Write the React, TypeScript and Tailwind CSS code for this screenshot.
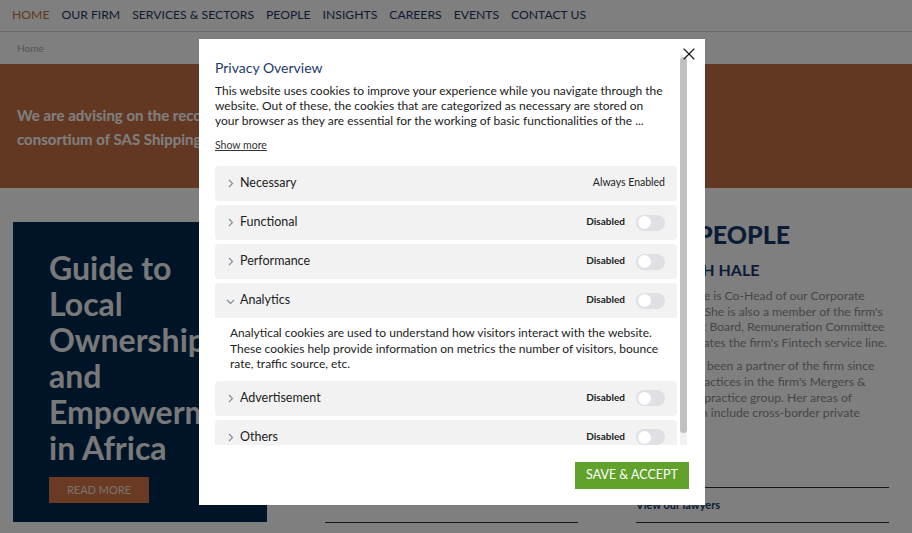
import React from "react";
import { X } from "lucide-react";

const navItems = ["HOME", "OUR FIRM", "SERVICES & SECTORS", "PEOPLE", "INSIGHTS", "CAREERS", "EVENTS", "CONTACT US"];

type Category = { name: string; always?: boolean; open?: boolean; text?: string[] };

const categories: Category[] = [
  { name: "Necessary", always: true },
  { name: "Functional" },
  { name: "Performance" },
  {
    name: "Analytics",
    open: true,
    text: [
      "Analytical cookies are used to understand how visitors interact with the website.",
      "These cookies help provide information on metrics the number of visitors, bounce",
      "rate, traffic source, etc.",
    ],
  },
  { name: "Advertisement" },
  { name: "Others" },
];

const Toggle: React.FC = () => (
  <span className="flex h-[16px] w-[29px] items-center rounded-full bg-[#dfdfe4] px-[2px]">
    <span className="h-[13px] w-[13px] rounded-full bg-white" />
  </span>
);

const CategoryRow: React.FC<{ cat: Category }> = ({ cat }) => (
  <div className="rounded-[4px] bg-[#f2f2f2]">
    <div className="flex h-[35px] items-center pl-[12px] pr-[12px]">
      <span className="flex w-[13px] items-center">
        {cat.open ? (
          <svg width="9" height="6" viewBox="0 0 9 6" className="-ml-[1px] mt-[3px]" fill="none">
            <path d="M1 1l3.5 3.5L8 1" stroke="#7c8a99" strokeWidth="1.1" />
          </svg>
        ) : (
          <svg width="6" height="9" viewBox="0 0 6 9" className="ml-[1px]" fill="none">
            <path d="M1 1l3.5 3.5L1 8" stroke="#7c8a99" strokeWidth="1.1" />
          </svg>
        )}
      </span>
      <span className="text-[12.5px] text-[#222]">{cat.name}</span>
      <span className="ml-auto flex items-center">
        {cat.always ? (
          <span className="-mt-[2px] text-[10.5px] text-[#222]">Always Enabled</span>
        ) : (
          <>
            <span className="mr-[11px] -mt-[2px] text-[10px] font-bold text-[#222]">Disabled</span>
            <Toggle />
          </>
        )}
      </span>
    </div>
    {cat.text && (
      <div className="whitespace-nowrap bg-white px-[15px] pb-[5px] pt-[7px] text-[12px] leading-[15.5px] text-[#222]">
        {cat.text.map((line) => (
          <p key={line}>{line}</p>
        ))}
      </div>
    )}
  </div>
);

const LinkBlock: React.FC<{ label?: string }> = ({ label }) => (
  <div className="mt-auto flex h-[36px] items-center border-y border-[#2a2a2a] text-[11px] font-bold text-[#17386e]">
    {label}
  </div>
);

export default function App() {
  return (
    <div className="relative h-[533px] w-[912px] overflow-hidden bg-white font-['Lato',sans-serif]">
      <nav className="flex h-[32px] items-center gap-[12px] border-b border-[#d6d6d6] pl-[12px] text-[12.2px] text-[#1b3766]">
        {navItems.map((item, i) => (
          <span key={item} className={i === 0 ? "text-[#c67044]" : ""}>
            {item}
          </span>
        ))}
      </nav>
      <div className="flex h-[32px] items-center pl-[17px] text-[10px] text-[#aaaaaa]">Home</div>

      <section className="h-[124px] whitespace-nowrap bg-[#c67044] pl-[17px] pt-[39px] text-[15px] font-bold leading-[24px] text-white">
        <p>We are advising on the recommended cash offer made by a</p>
        <p>consortium of SAS Shipping Agencies Services for the shares</p>
      </section>

      <main className="flex gap-[58px] pl-[13px] pt-[34px]">
        {/* feature card */}
        <div className="h-[300px] w-[254px] shrink-0 overflow-hidden bg-[#002850] pl-[36px] pt-[28px]">
          <h2 className="whitespace-nowrap text-[32px] font-bold leading-[36px] text-[#f2f2f2]">
            <span className="block">Guide to</span>
            <span className="block">Local</span>
            <span className="block">Ownership</span>
            <span className="block">and</span>
            <span className="block">Empowerment</span>
            <span className="block">in Africa</span>
          </h2>
          <button className="mt-[11px] h-[26px] w-[100px] bg-[#d47444] text-[11px] text-[#f3e3da]">READ MORE</button>
        </div>

        {/* middle column */}
        <div className="flex h-[301px] w-[253px] shrink-0 flex-col">
          <h3 className="text-[25px] font-black leading-[24px] text-[#17386e]">INSIGHTS</h3>
          <LinkBlock />
        </div>

        {/* people column */}
        <div className="flex h-[301px] w-[253px] shrink-0 flex-col">
          <h3 className="whitespace-nowrap text-[25px] font-black leading-[24px] text-[#17386e]">OUR PEOPLE</h3>
          <h4 className="mt-[14px] whitespace-nowrap text-[16px] font-bold leading-[20px] text-[#17386e]">DEBORAH HALE</h4>
          <div className="mt-[8px] whitespace-nowrap text-[12.2px] leading-[15.6px] text-[#8e8e8e]">
            <p>Deborah Hale is Co-Head of our Corporate</p>
            <p>department. She is also a member of the firm's</p>
            <p>Management Board, Remuneration Committee</p>
            <p>and co-ordinates the firm's Fintech service line.</p>
            <p className="mt-[8px]">Deborah has been a partner of the firm since</p>
            <p>2008, and practices in the firm's Mergers &amp;</p>
            <p>Acquisitions practice group.  Her areas of</p>
            <p>specialisation include cross-border private</p>
          </div>
          <LinkBlock label="View our lawyers" />
        </div>
      </main>

      {/* overlay */}
      <div className="absolute inset-0 bg-black/50" />

      {/* privacy modal */}
      <div className="absolute left-[199px] top-[39px] flex h-[466px] w-[506px] flex-col bg-white px-[16px] pt-[16px]">
        <button className="absolute right-[6px] top-[5px] text-[#1a1a1a]" aria-label="Close">
          <X size={20} strokeWidth={1.4} />
        </button>

        <div className="flex h-[390px] gap-[3px] pr-[2px]">
          <div className="w-[462px] shrink-0 overflow-hidden">
            <h2 className="mt-[3px] text-[14px] leading-[20px] text-[#1e3a6b]">Privacy Overview</h2>
            <div className="mt-[4.5px] whitespace-nowrap text-[12px] leading-[15px] text-[#212121]">
              <p>This website uses cookies to improve your experience while you navigate through the</p>
              <p>website. Out of these, the cookies that are categorized as necessary are stored on</p>
              <p>your browser as they are essential for the working of basic functionalities of the ...</p>
            </div>
            <p className="mt-[11px] text-[10.5px] leading-[13px] text-[#333] underline">Show more</p>
            <div className="mt-[14.5px] flex flex-col gap-[4px]">
              {categories.map((cat) => (
                <CategoryRow key={cat.name} cat={cat} />
              ))}
            </div>
          </div>
          <div className="w-[7px] shrink-0 bg-[#f1f1f1] pb-[12px] pt-[2px]">
            <div className="h-full rounded-full bg-[#c1c1c1]" />
          </div>
        </div>

        <div className="flex justify-end pt-[17px]">
          <button className="h-[27px] w-[114px] bg-[#61a22b] text-[12.5px] text-white">SAVE &amp; ACCEPT</button>
        </div>
      </div>
    </div>
  );
}
